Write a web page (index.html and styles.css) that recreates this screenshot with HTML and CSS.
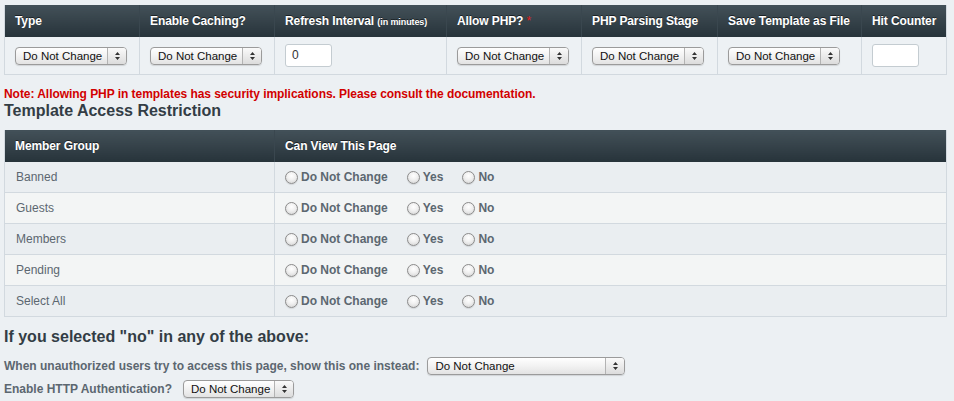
FILE: index.html
```html
<!DOCTYPE html>
<html>
<head>
<meta charset="utf-8">
<link rel="stylesheet" href="styles.css">
</head>
<body>
<table class="grid settings">
  <colgroup>
    <col style="width:135px"><col style="width:135px"><col style="width:172px"><col style="width:135px"><col style="width:136px"><col style="width:144px"><col style="width:85px">
  </colgroup>
  <thead>
    <tr>
      <th>Type</th>
      <th>Enable Caching?</th>
      <th>Refresh Interval <small>(in minutes)</small></th>
      <th>Allow PHP? <span class="req">*</span></th>
      <th>PHP Parsing Stage</th>
      <th>Save Template as File</th>
      <th>Hit Counter</th>
    </tr>
  </thead>
  <tbody>
    <tr>
      <td><span class="sel w112"><span class="sel-val">Do Not Change</span><span class="sel-arr"><svg width="7" height="10" viewBox="0 0 7 10"><path d="M3.5 1 L6 4 L1 4 Z M3.5 9 L6 6 L1 6 Z" fill="#333"/></svg></span></span></td>
      <td><span class="sel w112"><span class="sel-val">Do Not Change</span><span class="sel-arr"><svg width="7" height="10" viewBox="0 0 7 10"><path d="M3.5 1 L6 4 L1 4 Z M3.5 9 L6 6 L1 6 Z" fill="#333"/></svg></span></span></td>
      <td><span class="inp">0</span></td>
      <td><span class="sel w112"><span class="sel-val">Do Not Change</span><span class="sel-arr"><svg width="7" height="10" viewBox="0 0 7 10"><path d="M3.5 1 L6 4 L1 4 Z M3.5 9 L6 6 L1 6 Z" fill="#333"/></svg></span></span></td>
      <td><span class="sel w112"><span class="sel-val">Do Not Change</span><span class="sel-arr"><svg width="7" height="10" viewBox="0 0 7 10"><path d="M3.5 1 L6 4 L1 4 Z M3.5 9 L6 6 L1 6 Z" fill="#333"/></svg></span></span></td>
      <td><span class="sel w112"><span class="sel-val">Do Not Change</span><span class="sel-arr"><svg width="7" height="10" viewBox="0 0 7 10"><path d="M3.5 1 L6 4 L1 4 Z M3.5 9 L6 6 L1 6 Z" fill="#333"/></svg></span></span></td>
      <td><span class="inp"></span></td>
    </tr>
  </tbody>
</table>

<p class="note">Note: Allowing PHP in templates has security implications. Please consult the documentation.</p>
<h3 class="heading">Template Access Restriction</h3>

<table class="grid access">
  <colgroup>
    <col style="width:270px"><col style="width:672px">
  </colgroup>
  <thead>
    <tr><th>Member Group</th><th>Can View This Page</th></tr>
  </thead>
  <tbody>
    <tr class="odd"><td class="grp">Banned</td><td><div class="radios"><span class="opt"><span class="radio"></span>Do Not Change</span><span class="opt"><span class="radio"></span>Yes</span><span class="opt"><span class="radio"></span>No</span></div></td></tr>
    <tr class="even"><td class="grp">Guests</td><td><div class="radios"><span class="opt"><span class="radio"></span>Do Not Change</span><span class="opt"><span class="radio"></span>Yes</span><span class="opt"><span class="radio"></span>No</span></div></td></tr>
    <tr class="odd"><td class="grp">Members</td><td><div class="radios"><span class="opt"><span class="radio"></span>Do Not Change</span><span class="opt"><span class="radio"></span>Yes</span><span class="opt"><span class="radio"></span>No</span></div></td></tr>
    <tr class="even"><td class="grp">Pending</td><td><div class="radios"><span class="opt"><span class="radio"></span>Do Not Change</span><span class="opt"><span class="radio"></span>Yes</span><span class="opt"><span class="radio"></span>No</span></div></td></tr>
    <tr class="odd"><td class="grp">Select All</td><td><div class="radios"><span class="opt"><span class="radio"></span>Do Not Change</span><span class="opt"><span class="radio"></span>Yes</span><span class="opt"><span class="radio"></span>No</span></div></td></tr>
  </tbody>
</table>

<h3 class="heading sub">If you selected "no" in any of the above:</h3>
<div class="field">
  <span class="lbl">When unauthorized users try to access this page, show this one instead:</span>
  <span class="sel w198"><span class="sel-val">Do Not Change</span><span class="sel-arr"><svg width="7" height="10" viewBox="0 0 7 10"><path d="M3.5 1 L6 4 L1 4 Z M3.5 9 L6 6 L1 6 Z" fill="#333"/></svg></span></span>
</div>
<div class="field">
  <span class="lbl">Enable HTTP Authentication?</span>
  <span class="sel w111"><span class="sel-val">Do Not Change</span><span class="sel-arr"><svg width="7" height="10" viewBox="0 0 7 10"><path d="M3.5 1 L6 4 L1 4 Z M3.5 9 L6 6 L1 6 Z" fill="#333"/></svg></span></span>
</div>
</body>
</html>
```

FILE: styles.css
```css
html, body {
  margin: 0;
  background: #ecf0f3;
}
body {
  padding: 5px 8px 0 4px;
  font-family: "Liberation Sans", Arial, sans-serif;
  font-size: 12px;
  color: #5c6770;
}

.grid {
  width: 942px;
  table-layout: fixed;
  border-collapse: collapse;
  border: 1px solid #d2d9df;
  border-top: 0;
}
.grid th {
  height: 32px;
  padding: 0 10px;
  text-align: left;
  font-weight: bold;
  font-size: 12px;
  letter-spacing: -0.1px;
  color: #fff;
  text-shadow: 0 -1px 0 rgba(0,0,0,0.55);
  background: linear-gradient(#435159, #27333a);
  border: 0;
  border-right: 1px solid #3a474f;
  white-space: nowrap;
}
.grid th:last-child { border-right: 0; }
.grid th small {
  font-size: 9px;
  font-weight: bold;
}
.grid th .req {
  color: #e21b1b;
  font-weight: normal;
  text-shadow: none;
}
.grid td {
  padding: 0 0 0 10px;
  border-right: 1px solid #d2d9df;
  border-bottom: 1px solid #d2d9df;
  vertical-align: middle;
}
.grid td:last-child { border-right: 0; }

.settings td {
  height: 37px;
  background: #edf1f4;
}

.sel {
  display: inline-flex;
  align-items: stretch;
  box-sizing: border-box;
  height: 18px;
  border: 1px solid #9b9b9b;
  border-radius: 4px;
  background: linear-gradient(#ffffff, #f2f2f2 50%, #e3e3e3);
  box-shadow: 0 1px 1px rgba(0,0,0,0.12);
  vertical-align: middle;
  overflow: hidden;
  font-family: "Liberation Sans", Arial, sans-serif;
  font-size: 11.5px;
  font-weight: normal;
  color: #111;
}
.sel-val {
  flex: 1;
  padding-left: 7px;
  line-height: 16px;
  white-space: nowrap;
}
.sel-arr {
  width: 18px;
  flex: none;
  display: flex;
  align-items: center;
  justify-content: center;
  border-left: 1px solid #b3b3b3;
  background: linear-gradient(#fafafa, #dcdcdc);
}
.w112 { width: 112px; }
.w198 { width: 198px; }
.w111 { width: 111px; }

.inp {
  display: inline-block;
  box-sizing: border-box;
  width: 47px;
  height: 23px;
  border: 1px solid #c4ccd1;
  border-radius: 3px;
  background: #fff;
  padding-left: 6px;
  line-height: 21px;
  font-size: 12px;
  color: #333;
  vertical-align: middle;
}

.note {
  margin: 12px 0 0;
  font-size: 12px;
  line-height: 14px;
  font-weight: bold;
  letter-spacing: -0.05px;
  color: #d20000;
}
.heading {
  margin: 0 0 10px;
  font-size: 16px;
  line-height: 19px;
  font-weight: bold;
  color: #333d45;
}
.heading.sub {
  margin: 10px 0 8px;
}

.access td {
  height: 30px;
}
.access tr.odd td { background: #eaeef1; }
.access tr.even td { background: #f3f5f5; }
.access td.grp {
  padding-left: 11px;
  font-size: 12px;
  color: #5c6770;
}

.radios {
  display: flex;
  align-items: center;
  gap: 19px;
}
.opt {
  display: inline-flex;
  align-items: center;
  gap: 3px;
  font-weight: bold;
  font-size: 12px;
  color: #5c6770;
}
.radio {
  width: 13px;
  height: 13px;
  box-sizing: border-box;
  border-radius: 50%;
  border: 1px solid #8c8c8c;
  background: radial-gradient(circle at 50% 35%, #ffffff 0%, #f0f0f0 45%, #cfcfcf 100%);
  box-shadow: 0 1px 1px rgba(0,0,0,0.1);
}

.field {
  display: flex;
  align-items: center;
  gap: 8px;
  height: 23px;
  font-weight: bold;
  font-size: 12px;
  color: #5c6770;
}
.field + .field { gap: 11px; }
.field .lbl { white-space: nowrap; }
```
